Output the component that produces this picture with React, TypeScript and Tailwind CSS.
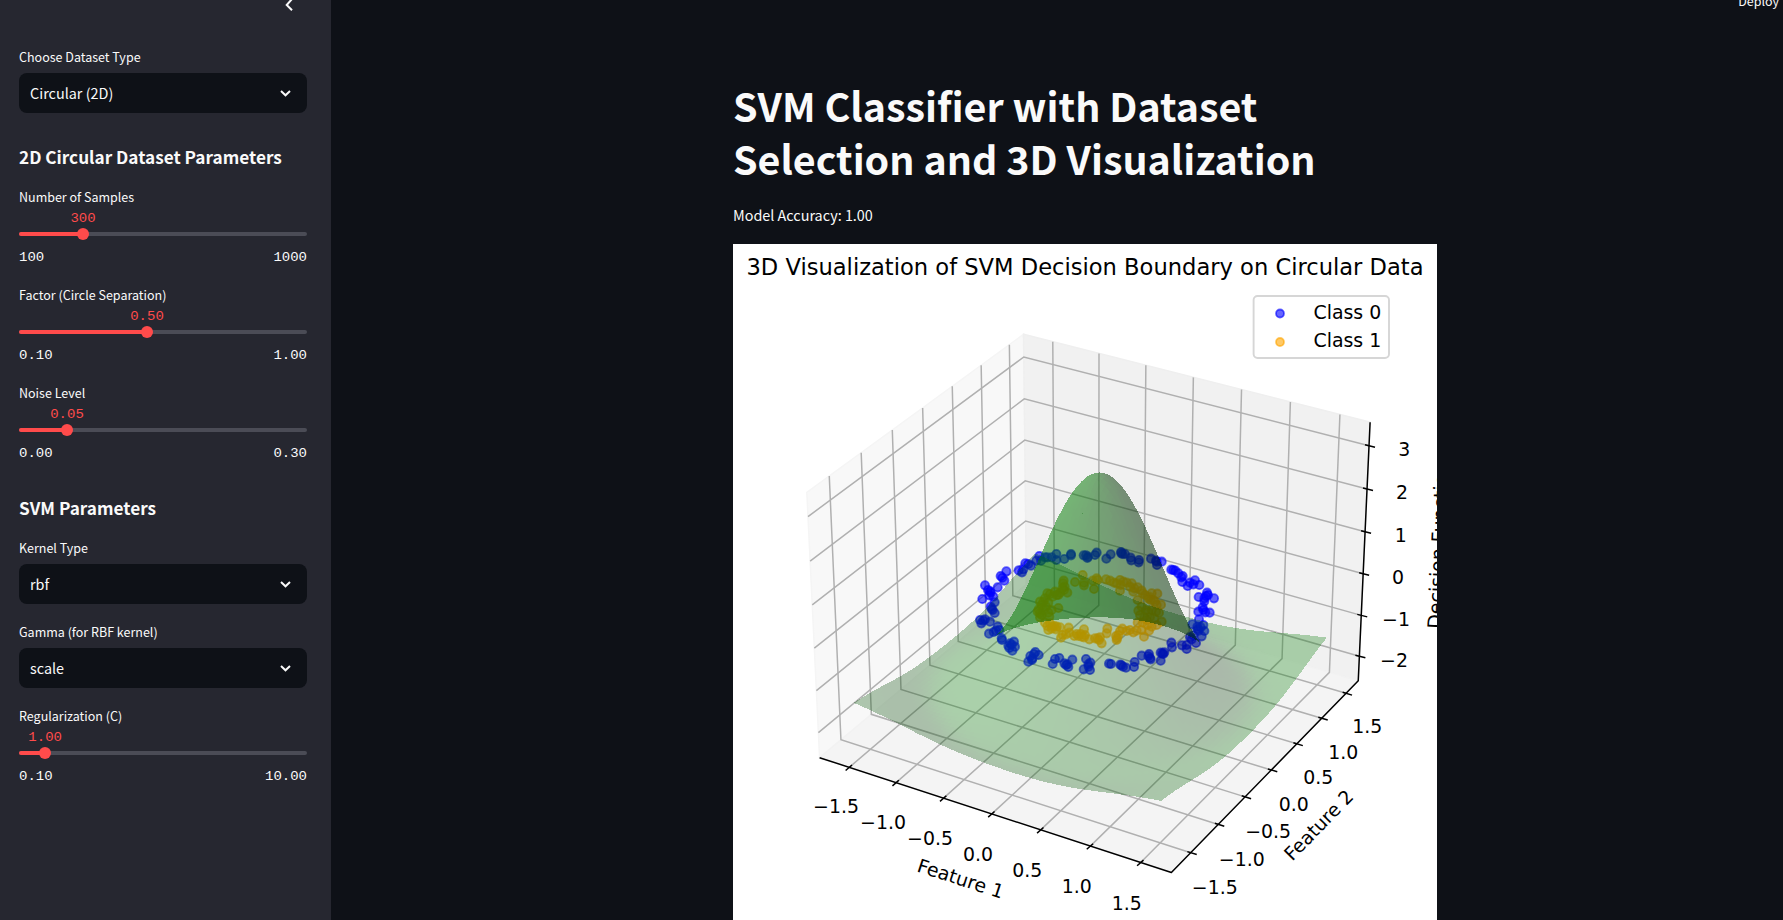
import React from 'react';

/* ---------- Sidebar ---------- */

const SANS = "font-['Noto_Sans_CJK_SC','Noto_Sans',sans-serif]";
const MONO = "font-['Liberation_Mono',monospace] text-[14px] leading-5";

function SelectField({ label, value, className = '' }: { label: string; value: string; className?: string }) {
  return (
    <div className={className}>
      <div className="flex h-5 items-center whitespace-nowrap text-[12.5px]">{label}</div>
      <div className="mt-[6px] flex h-10 items-center justify-between rounded-lg bg-[#0e1117] pl-[11px] pr-4 text-[14.4px]">
        <span className="leading-5">{value}</span>
        <svg width="11" height="7" viewBox="0 0 11 7" fill="none" stroke="#fafafa" strokeWidth="2">
          <path d="M1 1.1 L5.5 5.3 L10 1.1" />
        </svg>
      </div>
    </div>
  );
}

type SliderProps = { label: string; value: string; min: string; max: string; ratio: number; className?: string };

function SliderField({ label, value, min, max, ratio, className = '' }: SliderProps) {
  const pct = `${ratio * 100}%`;
  return (
    <div className={`h-[82px] ${className}`}>
      <div className="flex h-5 items-center whitespace-nowrap text-[12.5px]">{label}</div>
      <div className={`relative h-[25px] ${MONO}`}>
        <span className="absolute top-px -translate-x-1/2 scale-y-92 text-[#ff4b4b]" style={{ left: pct }}>
          {value}
        </span>
      </div>
      <div className="relative h-1 overflow-visible rounded-sm bg-[#4b4c56]">
        <div className="h-1 rounded-sm bg-[#ff4b4b]" style={{ width: pct }} />
        <div className="absolute -top-1 size-3 -translate-x-1/2 rounded-full bg-[#ff4b4b]" style={{ left: pct }} />
      </div>
      <div className={`mt-[11px] flex scale-y-92 justify-between ${MONO}`}>
        <span>{min}</span>
        <span>{max}</span>
      </div>
    </div>
  );
}

function Sidebar() {
  return (
    <aside className="flex h-full w-[331px] shrink-0 flex-col bg-[#262730] px-[19px] pr-6">
      <div className="flex h-[47px] justify-end pr-[13px]">
        <svg width="9" height="12" viewBox="0 0 9 12" fill="none" stroke="#fafafa" strokeWidth="2">
          <path d="M7 -1 L1.7 5 L7 10.3" />
        </svg>
      </div>
      <SelectField label="Choose Dataset Type" value="Circular (2D)" />
      <h2 className="mt-[31px] flex h-[25px] items-center whitespace-nowrap text-[17.2px] font-bold">
        2D Circular Dataset Parameters
      </h2>
      <SliderField className="mt-[18px]" label="Number of Samples" value="300" min="100" max="1000" ratio={0.2222} />
      <SliderField className="mt-4" label="Factor (Circle Separation)" value="0.50" min="0.10" max="1.00" ratio={0.4444} />
      <SliderField className="mt-4" label="Noise Level" value="0.05" min="0.00" max="0.30" ratio={0.1667} />
      <h2 className="mt-[30px] flex h-[25px] items-center whitespace-nowrap text-[17.2px] font-bold">SVM Parameters</h2>
      <SelectField className="mt-[18px]" label="Kernel Type" value="rbf" />
      <SelectField className="mt-[18px]" label="Gamma (for RBF kernel)" value="scale" />
      <SliderField className="mt-[18px]" label="Regularization (C)" value="1.00" min="0.10" max="10.00" ratio={0.0909} />
    </aside>
  );
}

/* ---------- 3D projection (elevation 30, azimuth -60) ---------- */

type P2 = [number, number];
const X0 = -1.82, X1 = 1.801, Y0 = -1.844, Y1 = 1.7557, Z0 = -2.605, Z1 = 3.536;
const C30 = Math.sqrt(3) / 2;

function project(x: number, y: number, z: number): [number, number, number] {
  const a = ((x - X0) / (X1 - X0) - 0.5) * 1.1905;
  const b = ((y - Y0) / (Y1 - Y0) - 0.5) * 1.1905;
  const c = ((z - Z0) / (Z1 - Z0) - 0.5) * 0.8929;
  const u = C30 * a + 0.5 * b;
  const v = -0.25 * a + 0.5 * C30 * b + C30 * c;
  const d = 10 - (0.5 * C30 * a - 0.75 * b + 0.5 * c);
  return [360.9 + (3385 * u) / d, 346.5 - (3385 * v) / d, d];
}

const pts = (list: number[][]) => list.map((p) => `${p[0].toFixed(2)},${p[1].toFixed(2)}`).join(' ');

/* ---------- Decision surface ---------- */

const GAMMA = 1.6;

function bessel0(x: number) {
  let sum = 1;
  let term = 1;
  for (let k = 1; k < 30; k++) {
    term *= (x * x) / 4 / (k * k);
    sum += term;
  }
  return sum;
}

const ringKernel = (r: number, R: number) => Math.exp(-GAMMA * (r * r + R * R)) * bessel0(2 * GAMMA * r * R);

function decision(x: number, y: number) {
  const dx = x - 0.015;
  const dy = y - 0.01;
  const r = Math.hypot(dx, dy);
  // The trough around the hill is shallower towards (-x, -y).
  const toward = r > 0 ? Math.max(0, (-C30 * dx - 0.5 * dy) / r) : 0;
  const trough = Math.exp(-(((r - 1.15) / 0.36) ** 2)) * (0.1 + 0.32 * toward * toward);
  return 13 * (ringKernel(r, 0.55) - ringKernel(r, 0.9)) - 1.36 + trough;
}

type Face = { depth: number; points: string; fill: string };

function buildSurface(): Face[] {
  const n = 72;
  const lo = -1.595;
  const hi = 1.555;
  const at = (i: number) => lo + ((hi - lo) * i) / n;
  const grid: number[][] = [];
  for (let i = 0; i <= n; i++) {
    grid.push([]);
    for (let j = 0; j <= n; j++) grid[i].push(decision(at(i), at(j)));
  }
  const h = (hi - lo) / n;
  const faces: Face[] = [];
  for (let i = 0; i < n; i++) {
    for (let j = 0; j < n; j++) {
      const q = [
        project(at(i), at(j), grid[i][j]),
        project(at(i + 1), at(j), grid[i + 1][j]),
        project(at(i + 1), at(j + 1), grid[i + 1][j + 1]),
        project(at(i), at(j + 1), grid[i][j + 1]),
      ];
      const gx = (grid[i + 1][j] - grid[i][j]) / h;
      const gy = (grid[i][j + 1] - grid[i][j]) / h;
      const dot = ((2 / 3) * (gx + gy) + 1 / 3) / Math.sqrt(gx * gx + gy * gy + 1);
      const shade = 0.3 + 0.35 * (dot + 1);
      faces.push({
        depth: q[0][2] + q[1][2] + q[2][2] + q[3][2],
        points: pts(q),
        fill: `rgb(0,${Math.round(128 * shade)},0)`,
      });
    }
  }
  return faces.sort((p, q) => q.depth - p.depth);
}

const SURFACE = buildSurface();

/* ---------- Samples ---------- */

const CLASS_0: P2[] = [
  [139,124],[122,138],[133,152],[127,143],[113,172],[75,166],[92,188],[84,180],[67,207],[104,217],[95,236],[92,230],[104,249],[100,200],
  [60,270],[75,268],[64,280],[90,275],[87,311],[101,306],[118,300],[113,290],[125,325],[145,347],[162,335],[157,362],[165,350],[150,340],
  [90,184],[88,196],[98,240],[70,272],[108,302],[126,330],[155,344],[148,354],[222,372],[216,390],[322,403],[386,410],[484,406],[570,384],
  [205,395],[217,385],[226,366],[236,375],[211,378],[278,402],[285,387],[298,384],[313,400],[325,411],[337,389],[318,405],[378,387],[385,403],
  [390,420],[371,418],[391,398],[447,401],[453,402],[481,404],[489,410],[498,413],[522,411],[524,396],[545,377],[567,372],[572,388],[565,378],
  [602,392],[607,370],[613,367],[602,368],[634,338],[636,352],[666,346],[680,357],[680,345],[695,328],[708,339],[725,319],[700,316],[697,283],
  [717,268],[712,290],[730,285],[733,303],[713,297],[715,245],[736,247],[749,248],[728,232],[733,214],[716,201],[741,188],[744,195],[762,205],
  [733,205],[718,165],[705,151],[700,163],[683,168],[690,158],[667,156],[668,138],[655,130],[646,122],[634,119],[640,120],[605,95],[591,105],
  [664,142],[738,198],[730,240],[722,292],[716,302],[610,372],[690,322],
  [588,92],[573,86],[590,95],[537,90],[536,97],[514,91],[512,83],[495,72],[483,66],[488,72],[484,70],[452,73],[439,86],[410,68],[405,75],
  [384,80],[371,76],[382,84],[378,76],[333,72],[333,76],[313,87],[289,72],[289,90],[275,82],[262,82],[243,92],[255,82],[238,78],[229,92],
  [213,107],[196,100],[205,102],[176,121],[186,127],[190,118],
];

const CLASS_1: P2[] = [
  [368,135],[345,156],[311,152],[309,160],[314,170],[322,188],[372,166],[402,177],[398,152],[410,145],[413,150],[372,158],[438,148],[450,152],
  [462,158],[470,160],[480,150],[482,165],[490,155],[480,182],[500,158],[510,170],[515,160],[523,175],[520,185],[533,210],[533,172],[545,182],
  [548,190],[555,195],[565,205],[567,200],[575,190],[592,191],[572,210],[580,210],[585,215],[603,224],[590,225],[545,230],[535,242],[558,240],
  [565,245],[575,240],[588,245],[597,248],[540,255],[553,262],[570,262],[583,265],[533,278],[548,278],[562,285],[560,270],[605,275],[590,285],
  [575,290],[545,300],[567,302],[552,320],[530,302],[520,307],[510,300],[500,303],[487,296],[480,303],[475,315],[471,325],[470,330],[468,318],
  [442,296],[440,310],[425,340],[413,325],[417,330],[405,325],[388,328],[372,298],[375,315],[365,320],[355,318],[350,312],[343,318],[326,293],
  [328,308],[318,313],[303,323],[308,315],[290,290],[283,288],[276,290],[265,300],[262,288],[270,280],[300,292],[255,278],[240,262],[245,255],
  [233,245],[236,238],[250,240],[265,248],[275,240],[295,234],[245,225],[250,215],[255,205],[265,218],[270,192],[262,190],[278,200],[285,185],
  [295,195],[300,188],[312,180],[240,215],[258,230],[240,250],[268,260],[290,195],[308,174],[372,322],[362,312],[420,322],[275,296],[288,298],
];

function Dots({ data, color }: { data: P2[]; color: string }) {
  return (
    <g fill={color} stroke={color} fillOpacity="0.6" strokeOpacity="0.6" strokeWidth="1.8">
      {data.map(([x, y], i) => (
        <circle key={i} cx={227 + x / 3} cy={286 + y / 3} r="4.15" />
      ))}
    </g>
  );
}

/* ---------- Axes ---------- */

const H_TICKS = [-1.5, -1, -0.5, 0, 0.5, 1, 1.5];
const Z_TICKS = [-2, -1, 0, 1, 2, 3];

const LABELS: [string, number, number][] = [
  ['−1.5', 103, 562.4], ['−1.0', 150, 578], ['−0.5', 197, 593.7], ['0.0', 245, 609.7], ['0.5', 294.3, 625.7], ['1.0', 343.7, 642], ['1.5', 393.7, 659],
  ['−1.5', 481.8, 643.2], ['−1.0', 508.8, 615], ['−0.5', 535.2, 587], ['0.0', 560.7, 560], ['0.5', 585.3, 533.4], ['1.0', 610.2, 508], ['1.5', 634.2, 482.4],
  ['3', 671.2, 205.2], ['2', 669, 248.2], ['1', 667.7, 290.7], ['0', 665, 333], ['−1', 663, 375], ['−2', 661, 415.7],
];

function Tick({ at, d }: { at: number[]; d: [number, number, number, number] }) {
  return <line x1={at[0] + d[0]} y1={at[1] + d[1]} x2={at[0] + d[2]} y2={at[1] + d[3]} />;
}

function Plot() {
  const leftWall = [project(X0, Y0, Z0), project(X0, Y1, Z0), project(X0, Y1, Z1), project(X0, Y0, Z1)];
  const rightWall = [project(X0, Y1, Z0), project(X1, Y1, Z0), project(X1, Y1, Z1), project(X0, Y1, Z1)];
  const floor = [project(X0, Y0, Z0), project(X1, Y0, Z0), project(X1, Y1, Z0), project(X0, Y1, Z0)];
  return (
    <svg
      width="704"
      height="676"
      viewBox="0 0 704 676"
      className="block bg-white font-['DejaVu_Sans',sans-serif]"
      fontSize="18.9"
      fill="#000"
    >
      <g strokeWidth="1.5">
        <polygon points={pts(leftWall)} fill="#f8f8f8" stroke="#f5f5f5" />
        <polygon points={pts(rightWall)} fill="#f1f1f1" stroke="#efefef" />
        <polygon points={pts(floor)} fill="#f4f4f4" stroke="#f2f2f2" />
      </g>
      <g fill="none" stroke="#b0b0b0" strokeWidth="1.5">
        {H_TICKS.map((t) => (
          <polyline key={`x${t}`} points={pts([project(t, Y0, Z0), project(t, Y1, Z0), project(t, Y1, Z1)])} />
        ))}
        {H_TICKS.map((t) => (
          <polyline key={`y${t}`} points={pts([project(X1, t, Z0), project(X0, t, Z0), project(X0, t, Z1)])} />
        ))}
        {Z_TICKS.map((t) => (
          <polyline key={`z${t}`} points={pts([project(X0, Y0, t), project(X0, Y1, t), project(X1, Y1, t)])} />
        ))}
      </g>
      <g fill="none" stroke="#000" strokeWidth="1.5">
        <polyline
          strokeLinejoin="round"
          points={pts([project(X0, Y0, Z0), project(X1, Y0, Z0), project(X1, Y1, Z0), project(X1, Y1, Z1)])}
        />
        {H_TICKS.map((t) => (
          <Tick key={`x${t}`} at={project(t, Y0, Z0)} d={[-3.6, 3.2, 2.8, -2.4]} />
        ))}
        {H_TICKS.map((t) => (
          <Tick key={`y${t}`} at={project(X1, t, Z0)} d={[-3.4, -1.1, 6, 1.8]} />
        ))}
        {Z_TICKS.map((t) => (
          <Tick key={`z${t}`} at={project(X1, Y1, t)} d={[-4, -1, 6, 1.5]} />
        ))}
      </g>
      <Dots data={CLASS_0} color="#0000ff" />
      <Dots data={CLASS_1} color="#ffa500" />
      <g shapeRendering="crispEdges" fillOpacity="0.3">
        {SURFACE.map((f, i) => (
          <polygon key={i} points={f.points} fill={f.fill} />
        ))}
      </g>
      <text x="13.5" y="31" fontSize="22.8" textLength="677" lengthAdjust="spacingAndGlyphs">
        3D Visualization of SVM Decision Boundary on Circular Data
      </text>
      {LABELS.map(([t, x, y], i) => (
        <text key={i} x={x} y={y + 6.9} textAnchor="middle">
          {t}
        </text>
      ))}
      <text textAnchor="middle" transform="translate(227.6 634.8) rotate(18)" y="6.5">
        Feature 1
      </text>
      <text textAnchor="middle" transform="translate(585.8 581.2) rotate(-45.7)" y="6.5">
        Feature 2
      </text>
      <text transform="translate(708 385) rotate(-87.4)">Decision Function</text>
      <rect x="520.6" y="52" width="135.4" height="62" rx="4" fill="#fff" stroke="#d6d6d6" strokeWidth="1.9" />
      <g fillOpacity="0.6" strokeOpacity="0.6" strokeWidth="1.8">
        <circle cx="547" cy="69.5" r="4" fill="#0000ff" stroke="#0000ff" />
        <circle cx="547" cy="98" r="4" fill="#ffa500" stroke="#ffa500" />
      </g>
      <text x="580.5" y="74.6">Class 0</text>
      <text x="580.5" y="103">Class 1</text>
    </svg>
  );
}

export default function App() {
  return (
    <div className={`flex h-[920px] w-full overflow-hidden bg-[#0e1117] text-[#fafafa] ${SANS}`}>
      <Sidebar />
      <main className="flex min-w-0 flex-1 flex-col">
        <header className="-mt-[9px] flex h-5 items-center justify-end pr-1 text-[12.5px]">Deploy</header>
        <div className="ml-[402px] mt-[68px] w-[704px]">
          <h1 className="whitespace-nowrap text-[39.4px] font-bold leading-[52.8px]">
            SVM Classifier with Dataset
            <br />
            Selection and 3D Visualization
          </h1>
          <p className="mb-[17px] mt-[18px] text-[14.4px] leading-6">Model Accuracy: 1.00</p>
          <Plot />
        </div>
      </main>
    </div>
  );
}
